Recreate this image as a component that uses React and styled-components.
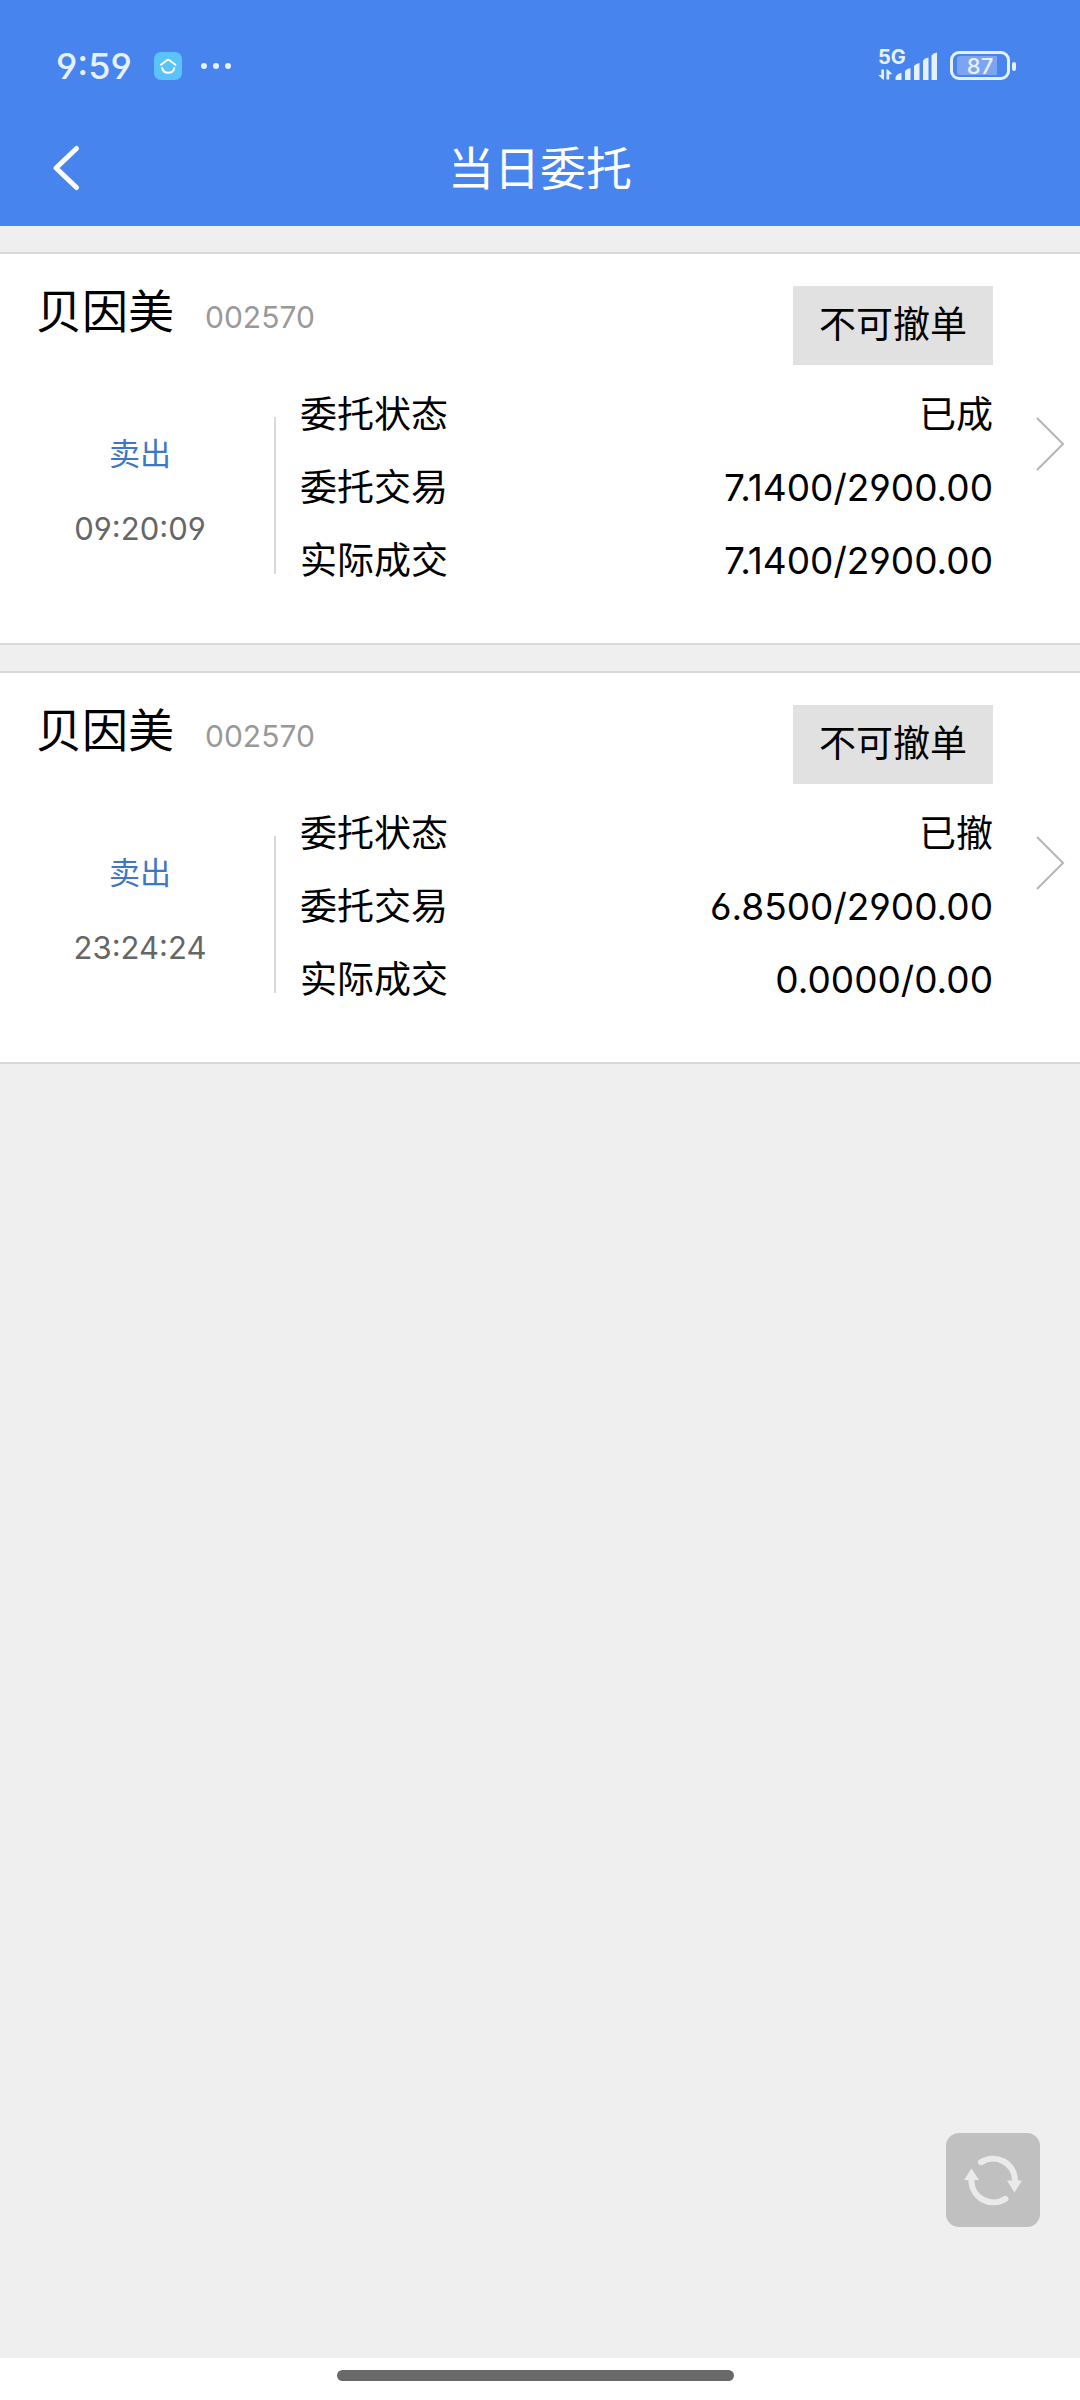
import React from "react";
import styled, { createGlobalStyle } from "styled-components";


const GlobalStyle = createGlobalStyle`
    * {
        box-sizing: border-box;
    }
    body {
        margin: 0;
        background: #efefef;
        color: #000;
        font-family: Inter, "Noto Sans CJK SC", sans-serif;
        font-feature-settings: "cv03", "cv04";
    }
    button {
        border: 0;
        padding: 0;
        font: inherit;
        color: inherit;
        background: none;
    }
`

const Page = styled.div`
    min-height: 100vh;
    display: flex;
    flex-direction: column;
`

const Header = styled.header`
    background: #4784ee;
    color: #fff;
`

const StatusBar = styled.div`
    height: 110px;
    padding: 22px 64px 0 56px;
    display: flex;
    align-items: center;
    color: #e6f1ff;
`

const Clock = styled.span`
    font-size: 36px;
    font-weight: 500;
    margin-right: 22px;
`

const Dots = styled.svg`
    margin-left: 18px;
`

const StatusRight = styled.div`
    height: 28px;
    margin-left: auto;
    display: flex;
    align-items: flex-end;
`

const Signal = styled.div`
    display: flex;
    align-items: flex-end;
    margin-right: 12px;
`

const Network = styled.div`
    display: flex;
    flex-direction: column;
    gap: 2px;
    font-size: 20px;
    line-height: 20px;
    font-weight: 700;
    width: 27px;
`

const Bars = styled.svg`
    margin-left: -10px;
`

const Battery = styled.div`
    width: 60px;
    height: 29px;
    border: 3px solid #e6f1ff;
    border-radius: 9px;
    padding: 2px 4px;
    display: flex;
`

const BatteryLevel = styled.div`
    flex: 1;
    display: flex;
    align-items: center;
    justify-content: center;
    border-radius: 3px;
    background: linear-gradient(to right, #7ba5f3 87%, transparent 87%);
    font-size: 22px;
    line-height: 18px;
    font-weight: 500;
`

const BatteryCap = styled.div`
    align-self: center;
    width: 4px;
    height: 9px;
    margin-left: 2px;
    border-radius: 2px;
    background: #e6f1ff;
`

const NavBar = styled.div`
    height: 116px;
    display: grid;
    grid-template-columns: 132px 1fr 132px;
    align-items: center;
`

const BackButton = styled.button`
    height: 100%;
    display: flex;
    align-items: center;
    padding-left: 50px;
`

const Title = styled.h1`
    margin: 0;
    font-size: 46px;
    line-height: 60px;
    font-weight: 400;
    text-align: center;
`

const OrderList = styled.main`
    flex: 1;
    display: flex;
    flex-direction: column;
    gap: 26px;
    padding: 26px 0;
`

const Card = styled.article`
    background: #fff;
    border-top: 2px solid #d9d9d9;
    border-bottom: 2px solid #d9d9d9;
    padding: 32px 0 46px;
`

const CardHead = styled.div`
    display: flex;
    align-items: flex-start;
    justify-content: space-between;
    padding: 0 87px 0 36px;
`

const Stock = styled.div`
    display: flex;
    align-items: baseline;
    gap: 31px;
`

const StockName = styled.h2`
    margin: 0;
    font-size: 46px;
    line-height: 50px;
    font-weight: 400;
`

const StockCode = styled.span`
    font-size: 30px;
    color: #999;
`

const CancelButton = styled.button`
    padding: 12px 26px 13px;
    background: #e1e1e1;
    font-size: 37px;
    line-height: 54px;
`

const CardBody = styled.div`
    display: flex;
    margin-top: 13px;
`

const Side = styled.div`
    width: 268px;
    margin-left: 6px;
    padding-top: 38px;
    text-align: center;
    font-size: 31px;
    line-height: 75px;
`

const SideType = styled.div`
    color: #3d78c4;
`

const SideTime = styled.div`
    color: #666;
`

const Divider = styled.div`
    width: 2px;
    margin: 39px 24px 23px 0;
    background: #d9d9d9;
`

const Details = styled.dl`
    flex: 1;
    margin: 0;
    font-size: 37px;
    line-height: 73px;
`

const DetailRow = styled.div`
    display: flex;
    justify-content: space-between;
    dd {
        margin: 0;
    }
`

const MoreLink = styled.a`
    width: 87px;
    padding: 38px 0 0 42px;
`

const RefreshButton = styled.button`
    position: fixed;
    right: 40px;
    bottom: 173px;
    width: 94px;
    height: 94px;
    border-radius: 13px;
    background: #c0c0c0;
`

const HomeBar = styled.footer`
    height: 42px;
    padding: 12px 9px 0 0;
    background: #fff;
`

const HomePill = styled.div`
    width: 37%;
    height: 11px;
    margin: 0 auto;
    border-radius: 6px;
    background: #696969;
`


const orders = [
    { id: 1, name: "贝因美", code: "002570", type: "卖出", time: "09:20:09", status: "已成", order: "7.1400/2900.00", deal: "7.1400/2900.00" },
    { id: 2, name: "贝因美", code: "002570", type: "卖出", time: "23:24:24", status: "已撤", order: "6.8500/2900.00", deal: "0.0000/0.00" },
]

const OrderCard = ({ order }) => {
    return (
        <Card>
            <CardHead>
                <Stock>
                    <StockName>{order.name}</StockName>
                    <StockCode>{order.code}</StockCode>
                </Stock>
                <CancelButton type="button">不可撤单</CancelButton>
            </CardHead>
            <CardBody>
                <Side>
                    <SideType>{order.type}</SideType>
                    <SideTime>{order.time}</SideTime>
                </Side>
                <Divider />
                <Details>
                    <DetailRow><dt>委托状态</dt><dd>{order.status}</dd></DetailRow>
                    <DetailRow><dt>委托交易</dt><dd>{order.order}</dd></DetailRow>
                    <DetailRow><dt>实际成交</dt><dd>{order.deal}</dd></DetailRow>
                </Details>
                <MoreLink href={`#order-${order.id}`} aria-label="详情">
                    <svg width="30" height="56" viewBox="0 0 30 56" fill="none" stroke="#b5b5b5" strokeWidth="2">
                        <path d="M2 2 L28 28 L2 54" />
                    </svg>
                </MoreLink>
            </CardBody>
        </Card>
    )
}

const App = () => {
    return (
        <Page>
            <GlobalStyle />
            <Header>
                <StatusBar>
                    <Clock>9:59</Clock>
                    <svg width="28" height="28" viewBox="0 0 28 28" fill="none" stroke="#fff" strokeWidth="2" strokeLinecap="round" strokeLinejoin="round">
                        <rect width="28" height="28" rx="7" fill="#5ac3fb" stroke="none" />
                        <path d="M7 12.700 L13 8.200 Q14.200 7.400 15.400 8.200 L21.400 12.700" />
                        <path d="M8.200 16 C9.500 22.400 19 22.400 20.300 16" />
                    </svg>
                    <Dots width="32" height="8" viewBox="0 0 32 8" fill="#e6f1ff">
                        <circle cx="4" cy="4" r="3" />
                        <circle cx="16" cy="4" r="3" />
                        <circle cx="28" cy="4" r="3" />
                    </Dots>
                    <StatusRight>
                        <Signal>
                            <Network>
                                5G
                                <svg width="16" height="11" viewBox="0 0 16 11" fill="#e6f1ff">
                                    <path d="M3.300 0.500 H6 V10.500 H5 L0.300 6 H3.300 Z" />
                                    <path d="M8.500 10.500 V0.500 H9.700 L14.500 5.200 H11.200 V10.500 Z" />
                                </svg>
                            </Network>
                            <Bars width="43" height="28" viewBox="0 0 43 28" fill="#e6f1ff">
                                <path d="M0.500 28 V25 Q3 21 6.500 21 V28 Z" />
                                <path d="M10 28 V19 Q12 16.500 15.500 16 V28 Z" />
                                <path d="M19 28 V14 Q21 11.500 24.500 11 V28 Z" />
                                <path d="M28 28 V8.500 Q30 6 33.500 5.500 V28 Z" />
                                <path d="M36.500 28 V3.500 Q38.500 1 42 0.500 V28 Z" />
                            </Bars>
                        </Signal>
                        <Battery><BatteryLevel>87</BatteryLevel></Battery>
                        <BatteryCap />
                    </StatusRight>
                </StatusBar>
                <NavBar>
                    <BackButton type="button" aria-label="返回">
                        <svg width="34" height="48" viewBox="0 0 34 48" fill="none" stroke="#fff" strokeWidth="5" strokeLinecap="round" strokeLinejoin="round">
                            <path d="M26.500 4.500 L6 24 L26.500 43.500" />
                        </svg>
                    </BackButton>
                    <Title>当日委托</Title>
                </NavBar>
            </Header>
            <OrderList>
                {orders.map(order => <OrderCard key={order.id} order={order} />)}
            </OrderList>
            <RefreshButton type="button" aria-label="刷新">
                <svg width="94" height="94" viewBox="0 0 94 94" fill="none" stroke="#eaeaea" strokeWidth="6" strokeLinecap="round">
                    <path d="M35 29.200 A22 22 0 0 1 69 47.500" />
                    <path d="M59.400 65.800 A22 22 0 0 1 25.400 47.500" />
                    <path d="M61 47.500 H76 L68.500 59.500 Z" fill="#eaeaea" stroke="none" />
                    <path d="M18 47 H33 L25.500 35.500 Z" fill="#eaeaea" stroke="none" />
                </svg>
            </RefreshButton>
            <HomeBar><HomePill /></HomeBar>
        </Page>
    );
}

export default App;
